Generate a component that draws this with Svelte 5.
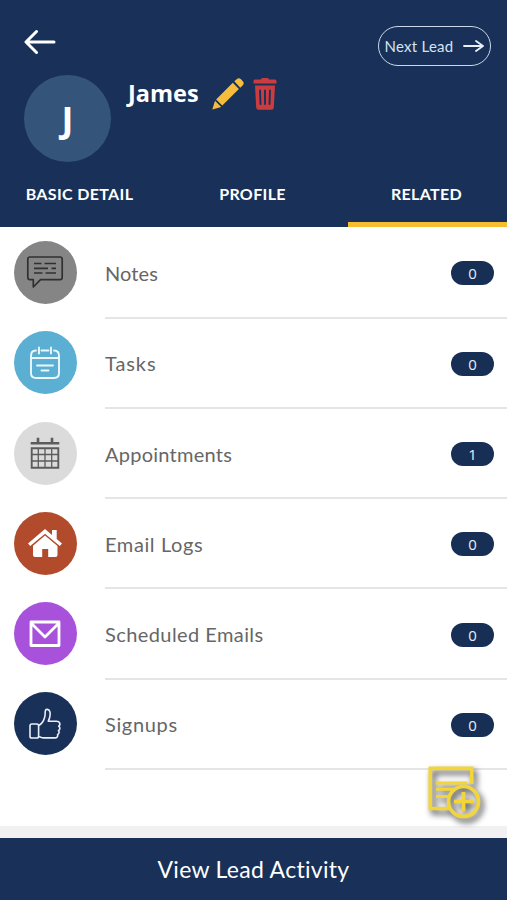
<script lang="ts">
    type Item = {
        icon: string;
        label: string;
        count: number;
        spacing: string;
    };

    const items: Item[] = [
        { icon: "notes", label: "Notes", count: 0, spacing: "0.1px" },
        { icon: "tasks", label: "Tasks", count: 0, spacing: "0.9px" },
        { icon: "appointments", label: "Appointments", count: 1, spacing: "0.25px" },
        { icon: "email", label: "Email Logs", count: 0, spacing: "0.6px" },
        { icon: "scheduled", label: "Scheduled Emails", count: 0, spacing: "0.42px" },
        { icon: "signups", label: "Signups", count: 0, spacing: "0.65px" },
    ];

    let tab = $state("RELATED");
</script>

<div class="screen">
    <header>
        <div class="top">
            <button class="back" aria-label="Back">
                <svg width="32" height="26" viewBox="0 0 32 26" fill="none" stroke="#fff" stroke-width="3" stroke-linecap="round" stroke-linejoin="round">
                    <path d="M12.5 2.5 2 13l10.500 10.500M2.500 13H30" />
                </svg>
            </button>
            <button class="next">
                <span>Next Lead</span>
                <svg width="21" height="14" viewBox="0 0 21 14" fill="none" stroke="#e8f1fa" stroke-width="1.8" stroke-linecap="round" stroke-linejoin="round">
                    <path d="M1 7H19.500M13 2l7 5-7 5" />
                </svg>
            </button>
        </div>

        <div class="lead">
            <div class="avatar">J</div>
            <h1>James</h1>
            <button class="edit" aria-label="Edit">
                <svg width="32" height="32" viewBox="0 0 32 32" fill="#f5bd3b">
                    <path d="M22.300 3.300 25 .9q2-1.500 4 .4l1.800 1.900q1.700 1.900.2 3.700l-2.700 2.800zM20.800 4.800l6.100 6.200L10.300 27.600 4.100 21.400zM3 22.800l6.200 6.100L.3 31.500z" />
                </svg>
            </button>
            <button class="delete" aria-label="Delete">
                <svg width="24" height="32" viewBox="0 0 24 32">
                    <path fill="#cb3c40" d="M8 1.500Q8 0 9.500 0h5Q16 0 16 1.500h6q1.500 0 1.500 1.500v2.500H.5V3Q.5 1.500 2 1.500z" />
                    <path fill="#cb3c40" d="M2 7.500h20l-1.200 22q-.1 2.200-2.200 2.200H5.400q-2.100 0-2.200-2.200z" />
                    <path stroke="#193158" stroke-width="1.900" stroke-linecap="round" d="m7 12.500.5 13.500M12 12.500V26M17 12.500 16.500 26" />
                </svg>
            </button>
        </div>

        <nav>
            {#each ["BASIC DETAIL", "PROFILE", "RELATED"] as name}
                <button class:active={tab === name} onclick={() => (tab = name)}>{name}</button>
            {/each}
        </nav>
    </header>

    <main>
        {#each items as item}
            <div class="row">
                <div class="icon {item.icon}">
                    {#if item.icon === "notes"}
                        <svg width="38" height="34" viewBox="0 0 38 34" fill="none" stroke="#303030" stroke-width="1.700" stroke-linejoin="round">
                            <path d="M4 2h30q2.200 0 2.200 2.200v18.300q0 2.200-2.200 2.200H14.500L7.300 32v-7.300H4q-2.200 0-2.200-2.200V4.200Q1.800 2 4 2z" />
                            <path d="M8 8.500h7.500M18.500 8.500H30M8 13.300h14M25.500 13.300H30M8 18h8.500M19.500 18H30" />
                        </svg>
                    {:else if item.icon === "tasks"}
                        <svg width="32" height="34" viewBox="0 0 32 34" fill="none" stroke="#edf8fd" stroke-width="1.900" stroke-linecap="round">
                            <path d="M7 4.500Q2 4.500 2 10v17q0 5 5 5h18q5 0 5-5V10q0-5.500-5-5.500M12.500 4.500h7M2 12h28M10 1.500v6M22 1.500v6" />
                            <path d="M8 19.500h16M12.500 24.500h7" />
                        </svg>
                    {:else if item.icon === "appointments"}
                        <svg width="30" height="32" viewBox="0 0 30 32" fill="none" stroke="#5c5c5c">
                            <path stroke-width="2.600" d="M.7 6.200h28.600M8 .8V6M22 .8V6" />
                            <path stroke-width="1.900" d="M1.700 11.200h26.600v19.500H1.700z" />
                            <path stroke-width="1.300" d="M8.300 11v19.500M15 11v19.500M21.700 11v19.500M1.500 17.500h27M1.500 24h27" />
                        </svg>
                    {:else if item.icon === "email"}
                        <svg width="34" height="29" viewBox="0 0 34 29" fill="#fff">
                            <path d="M17 0 24 6V1h4.700v9L34 14.500l-2.200 2.600L17 4.800 2.200 17.100 0 14.500z" />
                            <path d="M17 6.500 29.500 16.900V26q0 2-2 2h-7.300v-8h-6v8H7q-2 0-2-2v-9.300z" />
                        </svg>
                    {:else if item.icon === "scheduled"}
                        <svg width="32" height="28" viewBox="0 0 32 28" fill="none" stroke="#fff" stroke-width="2.800" stroke-linejoin="round">
                            <path d="M2 2h28v23.500H2zM2.500 3.500 16 17 29.500 3.500" />
                        </svg>
                    {:else}
                        <svg width="32" height="32" viewBox="0 0 32 32" fill="none" stroke="#e8eef7" stroke-width="1.600" stroke-linejoin="round">
                            <path d="M2.800 16h5q1.800 0 1.800 1.800v10.400Q9.600 30 7.800 30h-5Q1 30 1 28.200V17.800Q1 16 2.800 16z" />
                            <path d="M9.600 17.500c3.500-1.600 5-4.500 6-8 .7-2.200.4-4.200.7-6.500.2-2.300 3.600-2.200 4.500.5 1 3.200.1 6.300-1.500 9.700h8.200c3.500 0 4.300 3.500 2.200 4.900 1.700 1.500 1.400 3.600-.3 4.500 1.200 1.500.7 3.200-.8 3.900.5 2-.7 3.400-2.700 3.400H14.500c-2 0-3.200-1.200-4.900-1.400" />
                        </svg>
                    {/if}
                </div>
                <div class="body">
                    <span class="label" style:letter-spacing={item.spacing}>{item.label}</span>
                    <span class="count">{item.count}</span>
                </div>
            </div>
        {/each}

        <button class="add" aria-label="Add note">
            <svg width="54" height="56" viewBox="0 0 54 56" fill="none" stroke="#f2d639" stroke-width="3.700">
                <path d="M21 42.500H2.300V2.300h41.400V18" />
                <path stroke-width="3" d="M8 17h31M8 23.300h18M8 30.500h12" />
                <circle cx="35.500" cy="35.500" r="15" />
                <path d="M35.500 26v19M26 35.500h19" />
            </svg>
        </button>
    </main>

    <button class="activity">View Lead Activity</button>
</div>

<style>
    :global(body) {
        margin: 0;
    }

    .screen {
        display: flex;
        flex-direction: column;
        width: 507px;
        height: 900px;
        font-family: Lato, "Open Sans", sans-serif;
        font-variant-ligatures: none;
        background: #fff;
        overflow: hidden;
    }

    button {
        padding: 0;
        border: none;
        background: none;
        color: inherit;
        font: inherit;
    }

    svg {
        display: block;
    }

    header {
        display: flex;
        flex-direction: column;
        height: 227px;
        background: #193158;
        color: #fff;
    }

    .top {
        display: flex;
        justify-content: space-between;
        padding: 26px 16px 0 24px;
        height: 49px;
        box-sizing: border-box;
    }

    .back {
        align-self: flex-start;
        margin-top: 3px;
    }

    .next {
        display: flex;
        align-items: center;
        justify-content: space-between;
        box-sizing: border-box;
        flex-shrink: 0;
        width: 113px;
        height: 40px;
        padding: 0 6px 0 5.5px;
        border: 1.5px solid #c9d8ea;
        border-radius: 20px;
        color: #d5e3f2;
        font-size: 15px;
        letter-spacing: 0.25px;
    }

    .lead {
        display: flex;
        align-items: flex-start;
        padding: 26px 24px 0;
    }

    .avatar {
        width: 87px;
        height: 87px;
        border-radius: 50%;
        background: #34547a;
        font: 700 36px/89px "Open Sans", sans-serif;
        text-align: center;
    }

    h1 {
        width: 71px;
        margin: 1px 13px 0 17px;
        font: 700 23.5px/34px "Open Sans", sans-serif;
        white-space: nowrap;
    }

    .edit {
        margin-top: 3px;
    }

    .delete {
        margin: 3px 0 0 9px;
    }

    nav {
        display: grid;
        grid-template-columns: 159px 187px 161px;
        flex: 1;
        font-size: 16px;
        font-weight: 700;
        letter-spacing: 0.35px;
    }

    nav button {
        padding-top: 2px;
        letter-spacing: inherit;
        border-bottom: 5px solid transparent;
    }

    nav .active {
        margin-left: 2px;
        padding-right: 2px;
        border-color: #f7bd31;
    }

    main {
        position: relative;
        flex: 1;
        box-sizing: border-box;
        padding-top: 1.3px;
        border-bottom: 12px solid #f1f1f1;
    }

    .row {
        display: flex;
        height: 90.3px;
        padding-left: 13.5px;
    }

    .icon {
        display: flex;
        align-items: center;
        justify-content: center;
        width: 63px;
        height: 63px;
        margin: 12.700px 28.500px 0 0;
        border-radius: 50%;
    }

    .notes { background: #858585; }
    .tasks { background: #5bafd3; }
    .appointments { background: #dbdbdb; }
    .email { background: #b24a2c; }
    .scheduled { background: #a852dc; }
    .signups { background: #193158; }

    .body {
        display: flex;
        align-items: center;
        justify-content: space-between;
        flex: 1;
        box-sizing: border-box;
        padding-right: 13px;
        border-bottom: 2px solid #e5e5e5;
    }

    .label {
        color: #666;
        font-size: 20px;
        padding-top: 1px;
    }

    .count {
        width: 43px;
        height: 24px;
        margin-top: 2px;
        border-radius: 12px;
        background: #182f55;
        color: #e6eef8;
        font: 15px/24px "Open Sans", sans-serif;
        text-align: center;
    }

    .add {
        position: absolute;
        left: 428px;
        top: 539px;
        filter: drop-shadow(3px 4px 3px rgba(0, 0, 0, 0.75));
    }

    .activity {
        height: 62px;
        background: #193158;
        color: #fff;
        font-size: 23px;
        letter-spacing: 0.3px;
    }
</style>
